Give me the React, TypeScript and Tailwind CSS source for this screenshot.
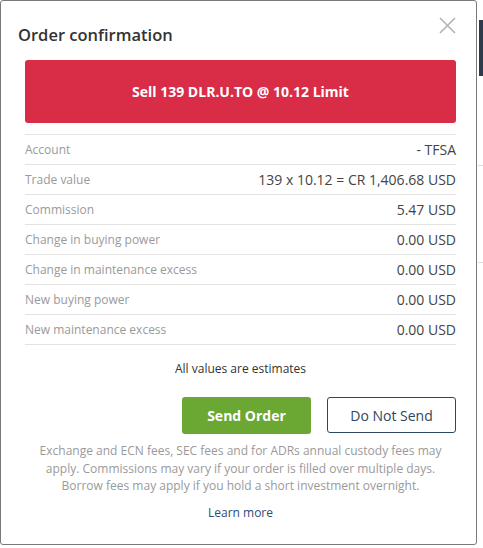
const rows = [
  { label: "Account", value: "- TFSA" },
  { label: "Trade value", value: "139 x 10.12 = CR 1,406.68 USD" },
  { label: "Commission", value: "5.47 USD" },
  { label: "Change in buying power", value: "0.00 USD" },
  { label: "Change in maintenance excess", value: "0.00 USD" },
  { label: "New buying power", value: "0.00 USD" },
  { label: "New maintenance excess", value: "0.00 USD" },
];

const App = () => {
  return (
    <div className="relative w-[483px] h-[548px] overflow-hidden bg-white font-['Open_Sans',sans-serif]">
      {/* page behind the modal */}
      <div className="absolute right-0 top-[20px] w-[4px] h-[56px] bg-[#2e3b4b]" />
      <div className="absolute right-0 top-[165px] w-[5px] border-t border-[#ddd]" />
      <div className="absolute right-0 top-[262px] w-[5px] border-t border-[#ddd]" />

      <div className="relative w-[477px] h-[545px] border border-[#7a7a7a] rounded-[3px] bg-white">
        <button className="absolute right-[20px] top-[16px] w-[17px] h-[17px] text-[#b3b3b3]">
          <svg viewBox="0 0 17 17" className="w-full h-full" fill="none" stroke="currentColor" strokeWidth="1.6">
            <path d="M1 1 L16 16 M16 1 L1 16" />
          </svg>
        </button>

        <h2 className="pl-[17px] pt-[22px] text-[16.5px] leading-[24px] font-semibold text-[#333]">Order confirmation</h2>

        <div className="pl-[24px] pr-[20px] mt-[13px]">
          <div className="h-[63px] rounded-[3px] bg-[#d92c46] flex items-center justify-center text-white text-[14px] font-bold">
            Sell 139 DLR.U.TO @ 10.12 Limit
          </div>

          <div className="mt-[11px] border-t border-[#e3e3e3]">
            {rows.map((r) => (
              <div key={r.label} className="h-[30px] flex items-center justify-between border-b border-[#e3e3e3]">
                <span className="text-[12px] text-[#9a9a9a]">{r.label}</span>
                <span className="text-[14px] text-[#444]">{r.value}</span>
              </div>
            ))}
          </div>

          <p className="mt-[15px] text-center text-[12px] text-[#333]">All values are estimates</p>

          <div className="mt-[19px] flex justify-end gap-[16px]">
            <button className="w-[129px] h-[37px] rounded-[3px] bg-[#6aa833] text-white text-[14px] font-bold">Send Order</button>
            <button className="w-[129px] h-[36px] rounded-[3px] border border-[#2f4660] text-[#2f4660] text-[14px]">Do Not Send</button>
          </div>

          <p className="mt-[8px] px-[10px] text-center text-[12px] leading-[17.5px] text-[#9a9a9a]">
            Exchange and ECN fees, SEC fees and for ADRs annual custody fees may apply. Commissions may vary if your order is filled over multiple days. Borrow fees may apply if you hold a short investment overnight.
          </p>

          <p className="mt-[9px] text-center text-[12px] text-[#2b4d72]">Learn more</p>
        </div>
      </div>
    </div>
  );
};

export default App;
